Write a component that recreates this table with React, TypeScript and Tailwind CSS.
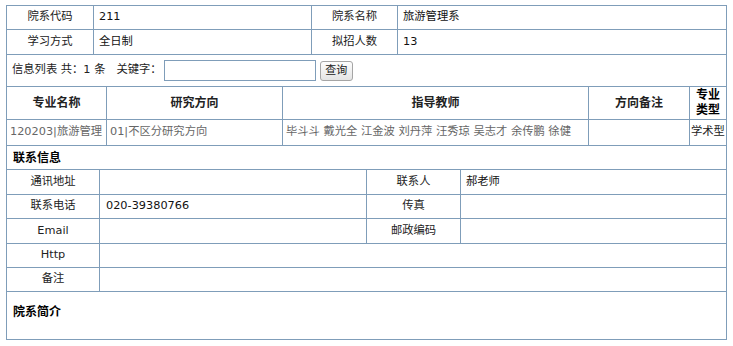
import React from 'react';

const line = 'border-[#7f9db9]';

const Label = ({ w, children, last }: { w?: string; children?: React.ReactNode; last?: boolean }) => (
  <div className={`${w ?? 'flex-1'} ${last ? '' : 'border-r'} ${line} flex items-center justify-center text-[#222]`}>
    {children}
  </div>
);

const Value = ({ w, children, last }: { w?: string; children?: React.ReactNode; last?: boolean }) => (
  <div className={`${w ?? 'flex-1'} ${last ? '' : 'border-r'} ${line} flex items-center pl-[5px] text-[#111] whitespace-nowrap overflow-hidden`}>
    {children}
  </div>
);

const teachers = '毕斗斗 戴光全 江金波 刘丹萍 汪秀琼 吴志才 余传鹏 徐健';

export default function App() {
  return (
    <div className="min-h-screen bg-white pt-[5px] pl-[6px] text-[11.3px]" style={{ fontFamily: '"DejaVu Sans", "Noto Sans CJK SC", sans-serif' }}>
      <div className={`w-[721px] border ${line}`}>
        {/* basic info */}
        <div className={`flex h-[24px] border-b ${line}`}>
          <Label w="w-[87px]">院系代码</Label>
          <Value w="w-[218px]">211</Value>
          <Label w="w-[86px]">院系名称</Label>
          <Value last>旅游管理系</Value>
        </div>
        <div className={`flex h-[25px] border-b ${line}`}>
          <Label w="w-[87px]">学习方式</Label>
          <Value w="w-[218px]">全日制</Value>
          <Label w="w-[86px]">拟招人数</Label>
          <Value last>13</Value>
        </div>

        {/* search */}
        <div className={`flex items-center h-[32px] border-b ${line} pl-[5px] text-[#222]`}>
          <span className="whitespace-pre">信息列表 共：1 条</span>
          <span className="ml-[11px]">关键字：</span>
          <input type="text" className={`ml-[2px] w-[152px] h-[21px] border ${line} outline-none`} />
          <button className="ml-[4px] w-[33px] h-[20px] rounded-[3px] border border-[#a5a5a5] bg-gradient-to-b from-[#fdfdfd] to-[#e4e4e4] text-[11px] text-[#222] leading-none">
            查询
          </button>
        </div>

        {/* list header */}
        <div className={`flex h-[33px] border-b ${line} text-[12px] font-bold text-black`}>
          <Label w="w-[100px]">专业名称</Label>
          <Label w="w-[176px]">研究方向</Label>
          <Label w="w-[306px]">指导教师</Label>
          <Label w="w-[101px]">方向备注</Label>
          <div className="flex-1 flex items-center justify-center text-center leading-[15px]">
            专业
            <br />
            类型
          </div>
        </div>
        <div className={`flex h-[26px] border-b ${line} text-[#666]`}>
          <div className={`w-[100px] border-r ${line} flex items-center pl-[3px] whitespace-nowrap overflow-hidden`}>120203|旅游管理</div>
          <div className={`w-[176px] border-r ${line} flex items-center pl-[3px] whitespace-nowrap overflow-hidden`}>01|不区分研究方向</div>
          <div className={`w-[306px] border-r ${line} flex items-center pl-[3px] whitespace-nowrap overflow-hidden`}>{teachers}</div>
          <div className={`w-[101px] border-r ${line}`}></div>
          <div className="flex-1 flex items-center pl-[1px] text-[#222] whitespace-nowrap overflow-hidden">学术型</div>
        </div>

        {/* contact */}
        <div className={`flex items-center h-[24px] border-b ${line} pl-[6px] text-[12px] font-bold text-black`}>联系信息</div>
        <div className={`flex h-[25px] border-b ${line}`}>
          <Label w="w-[93px]">通讯地址</Label>
          <Value w="w-[267px]"></Value>
          <Label w="w-[94px]">联系人</Label>
          <Value last>郝老师</Value>
        </div>
        <div className={`flex h-[24px] border-b ${line}`}>
          <Label w="w-[93px]">联系电话</Label>
          <Value w="w-[267px]">
            <span className="pl-[1px]">020-39380766</span>
          </Value>
          <Label w="w-[94px]">传真</Label>
          <Value last></Value>
        </div>
        <div className={`flex h-[25px] border-b ${line}`}>
          <Label w="w-[93px]">Email</Label>
          <Value w="w-[267px]"></Value>
          <Label w="w-[94px]">邮政编码</Label>
          <Value last></Value>
        </div>
        <div className={`flex h-[24px] border-b ${line}`}>
          <Label w="w-[93px]">Http</Label>
          <Value last></Value>
        </div>
        <div className={`flex h-[24px] border-b ${line}`}>
          <Label w="w-[93px]">备注</Label>
          <Value last></Value>
        </div>

        {/* intro */}
        <div className="h-[47px] pl-[6px] pt-[12px] text-[12px] font-bold text-black leading-[16px]">院系简介</div>
      </div>
    </div>
  );
}
